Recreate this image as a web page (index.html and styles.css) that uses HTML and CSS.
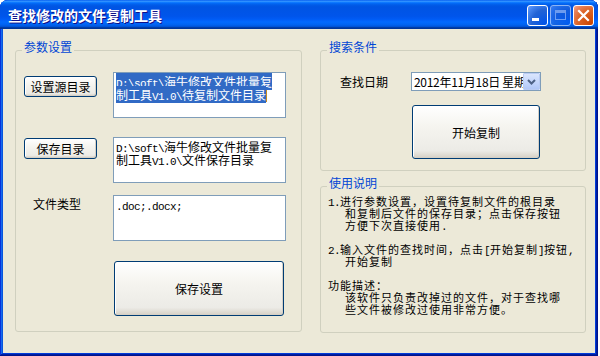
FILE: index.html
```html
<!DOCTYPE html>
<html lang="zh-CN">
<head>
    <meta charset="UTF-8">
    <title>查找修改的文件复制工具</title>
    <link rel="stylesheet" href="styles.css">
</head>
<body>

    <div class="window">
        <div class="titlebar">
            <span class="title">查找修改的文件复制工具</span>
            <div class="controls">
                <span class="ctl ctl-min"><i></i></span>
                <span class="ctl ctl-max"><i></i></span>
                <span class="ctl ctl-close">
                    <svg width="13" height="13" viewBox="0 0 13 13"><path d="M2 2 L11 11 M11 2 L2 11" stroke="#fff" stroke-width="2.2" stroke-linecap="square"/></svg>
                </span>
            </div>
        </div>

        <div class="client">
            <!-- left group: settings -->
            <fieldset class="group group-params">
                <legend>参数设置</legend>
                <div class="group-body">
                    <div class="row row-src">
                        <button class="btn btn-small">设置源目录</button>
                        <div class="edit"><span class="sel"><span class="mono">D:\soft\</span>海牛修改文件批量复</span><br><span class="sel">制工具<span class="mono">V1.0\</span>待复制文件目录</span><span class="caret"></span></div>
                    </div>

                    <div class="row row-dst">
                        <button class="btn btn-small">保存目录</button>
                        <div class="edit"><span class="mono">D:\soft\</span>海牛修改文件批量复<br>制工具<span class="mono">V1.0\</span>文件保存目录</div>
                    </div>

                    <div class="row row-type">
                        <span class="field-label">文件类型</span>
                        <div class="edit"><span class="mono">.doc;.docx;</span></div>
                    </div>

                    <div class="row row-save">
                        <button class="btn btn-big">保存设置</button>
                    </div>
                </div>
            </fieldset>

            <div class="side">
                <!-- search -->
                <fieldset class="group group-search">
                    <legend>搜索条件</legend>
                    <div class="group-body">
                        <div class="date-row">
                            <span class="date-label">查找日期</span>
                            <div class="datepicker">
                                <span class="date-text">2012年11月18日 星期</span>
                                <span class="drop">
                                    <svg width="9" height="6" viewBox="0 0 9 6"><path d="M1 1 L4.5 4.5 L8 1" fill="none" stroke="#4d6185" stroke-width="2"/></svg>
                                </span>
                            </div>
                        </div>
                        <button class="btn btn-start">开始复制</button>
                    </div>
                </fieldset>

                <!-- help -->
                <fieldset class="group group-help">
                    <legend>使用说明</legend>
                    <div class="group-body help">
                        <p><span class="mono">1.</span>进行参数设置，设置待复制文件的根目录</p>
                        <p class="indent">和复制后文件的保存目录；点击保存按钮</p>
                        <p class="indent">方便下次直接使用<span class="mono">.</span></p>
                        <p>&nbsp;</p>
                        <p><span class="mono">2.</span>输入文件的查找时间，点击<span class="mono">[</span>开始复制<span class="mono">]</span>按钮<span class="mono">,</span></p>
                        <p class="indent">开始复制</p>
                        <p>&nbsp;</p>
                        <p>功能描述：</p>
                        <p class="indent">该软件只负责改掉过的文件，对于查找哪</p>
                        <p class="indent">些文件被修改过使用非常方便。</p>
                    </div>
                </fieldset>
            </div>
        </div>
    </div>

</body>
</html>
```

FILE: styles.css
```css
/* Reset CSS */
* {
    margin: 0;
    padding: 0;
    box-sizing: border-box;
}

body {
    font-family: "Noto Sans CJK SC", "Liberation Sans", sans-serif;
    font-size: 12px;
    color: #000;
    background-color: #fff;
}

.window {
    width: 598px;
    height: 356px;
    display: flex;
    flex-direction: column;
    background-color: #0054e3;
    border-radius: 8px 8px 0 0;
    box-shadow: inset -1px -1px #00138c, inset 1px 1px #0831d9,
                inset -2px -2px #001ea0, inset 2px 2px #166aee,
                inset -3px -3px #003bda, inset 3px 3px #0855dd;
}

/* title bar */
.titlebar {
    height: 29px;
    display: flex;
    align-items: center;
    justify-content: space-between;
    padding: 0 4px 0 8px;
    border-radius: 8px 8px 0 0;
    background: linear-gradient(180deg, #0058ee 0%, #3593ff 4%, #288eff 6%, #127dff 8%,
        #036ffc 10%, #0262ee 14%, #0057e5 20%, #0054e3 24%, #0055eb 56%, #005bf5 66%,
        #026afe 76%, #0062ef 86%, #0052d6 92%, #0040ab 94%, #003092 100%);
}

.title {
    color: #fff;
    font-size: 14px;
    font-weight: bold;
    line-height: 16px;
    text-shadow: 1px 1px #0f1089;
}

.controls {
    display: flex;
    gap: 2px;
    margin-top: 1px;
}

.ctl {
    width: 21px;
    height: 21px;
    border: 1px solid #fff;
    border-radius: 3px;
    display: flex;
    align-items: center;
    justify-content: center;
    position: relative;
    background: radial-gradient(circle at 90% 90%, #0054e9 0%, #2263d5 55%, #4282ee 80%, #6fa2ff 100%);
}

.ctl-min i {
    position: absolute;
    left: 4px;
    bottom: 4px;
    width: 7px;
    height: 3px;
    background-color: #fff;
}

.ctl-max {
    opacity: 0.55;
}

.ctl-max i {
    width: 11px;
    height: 10px;
    border: 1px solid #c6d6f7;
    border-top-width: 3px;
}

.ctl-close {
    background: radial-gradient(circle at 90% 90%, #cc4600 0%, #dc6527 55%, #e7805a 80%, #f3a58c 100%);
}

/* client area */
.client {
    flex: 1;
    margin: 0 3px 3px;
    background-color: #ece9d8;
    display: flex;
    padding: 12px 0 0 12px;
    gap: 18px;
}

.group {
    border: 1px solid #d0d0bf;
    border-radius: 3px;
    padding: 0;
    margin: 0;
    min-width: 0;
}

.group legend {
    color: #0046d5;
    font-size: 12px;
    line-height: 12px;
    padding: 0 2px 6px;
    margin-left: 6px;
}

.group-params {
    width: 287px;
    height: 291px;
}

.group-params .group-body {
    padding-left: 8px;
}

.row {
    display: flex;
    align-items: flex-start;
    gap: 16px;
}

.row-src {
    margin-top: 13px;
}

.row-src .btn-small {
    margin-top: 4px;
}

.row-dst {
    margin-top: 19px;
}

.row-dst .btn-small {
    margin-top: 1px;
}

.row-type {
    margin-top: 12px;
}

.row-save {
    margin-top: 20px;
    padding-left: 90px;
}

.field-label {
    width: 73px;
    padding-left: 9px;
    margin-top: 3px;
    line-height: 12px;
}

/* buttons */
.btn {
    font-family: inherit;
    font-size: 12px;
    color: #000;
    border: 1px solid #003c74;
    border-radius: 3px;
    background: linear-gradient(180deg, #ffffff 0%, #f5f4ef 40%, #ecebe6 86%, #d6d0c5 100%);
    box-shadow: inset -1px -1px #d6d0c5, inset 1px 1px #fff;
    cursor: pointer;
}

.btn-small {
    width: 73px;
    height: 21px;
    line-height: 18px;
}

.btn-big {
    width: 170px;
    height: 55px;
}

/* text boxes */
.edit {
    width: 173px;
    height: 46px;
    background-color: #fff;
    border: 1px solid #7f9db9;
    padding: 2px 2px;
    line-height: 13px;
    white-space: nowrap;
    overflow: hidden;
}

.mono {
    font-family: "Liberation Mono", monospace;
    font-size: 11px;
    letter-spacing: -0.6px;
    line-height: 0;
}

.sel {
    background-color: #316ac5;
    color: #fff;
}

.caret {
    display: inline-block;
    width: 1px;
    height: 12px;
    vertical-align: -2px;
    background-color: #c58a1e;
}

/* right side */
.side {
    display: flex;
    flex-direction: column;
    gap: 6px;
}

.group-search {
    width: 266px;
    height: 130px;
}

.group-search .group-body {
    padding-left: 19px;
}

.date-row {
    display: flex;
    margin-top: 13px;
}

.date-label {
    width: 71px;
    line-height: 19px;
}

.datepicker {
    width: 130px;
    height: 19px;
    border: 1px solid #7f9db9;
    background-color: #fff;
    display: flex;
    overflow: hidden;
}

.date-text {
    flex: 1;
    padding-left: 2px;
    line-height: 17px;
    white-space: nowrap;
    overflow: hidden;
    letter-spacing: -0.3px;
}

.drop {
    width: 17px;
    height: 17px;
    display: flex;
    align-items: center;
    justify-content: center;
    border: 1px solid #b9cbf3;
    border-radius: 1px;
    background: linear-gradient(180deg, #dbe6fd 0%, #c2d4fb 60%, #b1c7f7 100%);
}

.btn-start {
    width: 128px;
    height: 54px;
    margin: 14px 0 0 72px;
    display: block;
}

.group-help {
    width: 266px;
    height: 156px;
}

.help {
    padding-left: 7px;
}

.help p {
    font-size: 11px;
    letter-spacing: 1px;
    line-height: 12px;
    white-space: nowrap;
}

.help .indent {
    padding-left: 17px;
}
```
